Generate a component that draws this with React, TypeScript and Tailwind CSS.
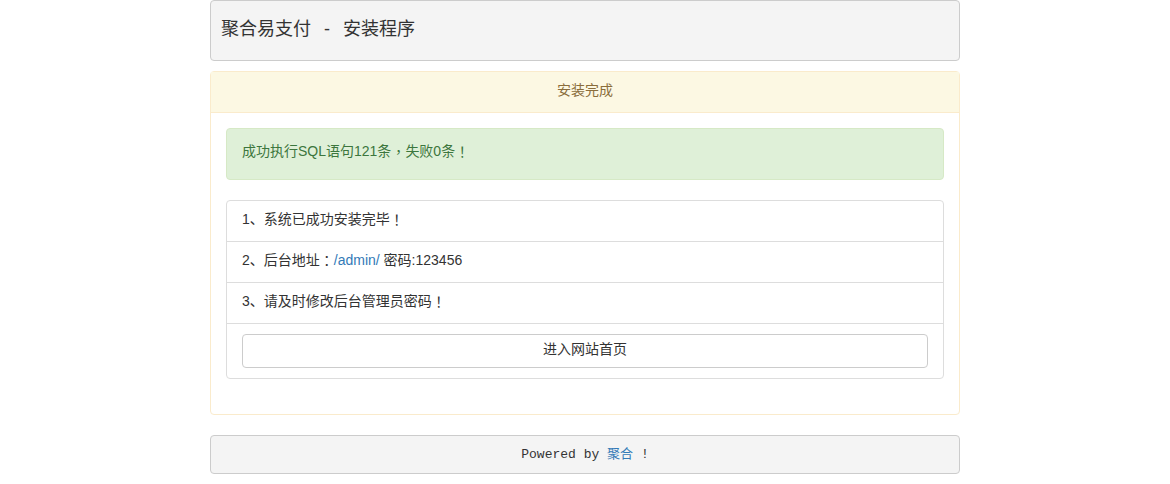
import React from "react";

const P = ({ children }: { children: React.ReactNode }) => (
  <span
    className="inline-block h-[20px] align-top leading-[20px] overflow-hidden"
    style={{ fontFamily: '"Noto Sans CJK TC", sans-serif' }}
  >
    {children}
  </span>
);

export default function App() {
  const font = {
    fontFamily:
      '"Liberation Sans", Arial, "Noto Sans CJK SC", sans-serif',
  } as React.CSSProperties;
  return (
    <div className="min-h-[484px] bg-white text-[14px] leading-[20px] text-[#333]" style={font}>
      <div className="mx-auto w-[750px]">
        <div className="h-[61px] rounded-[4px] border border-[#ccc] bg-[#f4f4f4] pl-[10px] pt-[18px]">
          <h1 className="text-[18px] leading-[20px] font-normal text-[#333]">
            聚合易支付<span className="mx-[13px]">-</span>安装程序
          </h1>
        </div>

        <div className="mt-[10px] rounded-[4px] border border-[#faebcc] bg-white">
          <div className="h-[41px] border-b border-[#faebcc] bg-[#fcf8e3] px-[15px] pt-[8px] text-center text-[#8a6d3b]">
            安装完成
          </div>
          <div className="p-[15px]">
            <div className="mb-[20px] h-[52px] rounded-[4px] border border-[#d6e9c6] bg-[#dff0d8] px-[15px] pt-[12px] text-[#3c763d]">
              成功执行SQL语句121条<P>，</P>失败0条<P>！</P>
            </div>
            <ul className="mb-[20px] rounded-[4px] border border-[#ddd]">
              <li className="h-[41px] border-b border-[#ddd] px-[15px] pt-[8px]">
                1、系统已成功安装完毕<P>！</P>
              </li>
              <li className="h-[41px] border-b border-[#ddd] px-[15px] pt-[8px]">
                2、后台地址<P>：</P><a className="text-[#337ab7]">/admin/</a> 密码:123456
              </li>
              <li className="h-[41px] border-b border-[#ddd] px-[15px] pt-[8px]">
                3、请及时修改后台管理员密码<P>！</P>
              </li>
              <li className="px-[15px] py-[10px]">
                <button className="block h-[34px] w-full rounded-[4px] border border-[#ccc] bg-white px-[12px] pt-[4px] pb-[8px] text-center text-[14px] leading-[20px] text-[#333]">
                  进入网站首页
                </button>
              </li>
            </ul>
          </div>
        </div>

        <div
          className="mt-[20px] flex h-[39px] items-center justify-center rounded-[4px] border border-[#ccc] bg-[#f4f4f4] text-[13px] text-[#333]"
          style={{ fontFamily: '"Liberation Mono", "Courier New", "Noto Sans CJK SC", monospace' }}
        >
          <span className="whitespace-pre">
            Powered by <a className="text-[#337ab7]">聚合</a> !
          </span>
        </div>
      </div>
    </div>
  );
}
